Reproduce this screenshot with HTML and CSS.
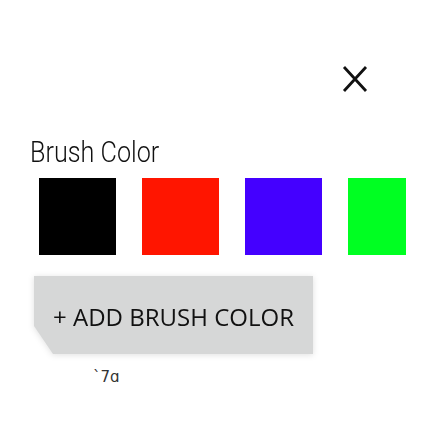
FILE: index.html
```html
<!DOCTYPE html>
<html>
<head>
<meta charset="utf-8">
<link rel="stylesheet" href="styles.css">
</head>
<body>
<div class="page">
  <div class="top">
    <svg class="close" width="26" height="28" viewBox="0 0 26 28">
      <path d="M2 2 L24 26 M24 2 L2 26" stroke="#111" stroke-width="2.8" fill="none"/>
    </svg>
  </div>
  <div class="title"><span>Brush Color</span></div>
  <div class="swatches">
    <div class="sw black"></div>
    <div class="sw red"></div>
    <div class="sw blue"></div>
    <div class="sw green"></div>
  </div>
  <div class="btnwrap"><div class="btn">+ ADD BRUSH COLOR</div></div>
  <div class="note">ˋ7ɑ</div>
</div>
</body>
</html>
```
FILE: styles.css
```css
html, body { margin: 0; padding: 0; background: #fff; }
.page { width: 432px; height: 432px; position: relative; font-family: Roboto, "Noto Sans", sans-serif; }
.top { display: flex; justify-content: flex-end; padding: 65px 64px 0 0; height: 28px; }
.close { display: block; }
.title { margin-top: 41px; padding-left: 30px; font-size: 30px; font-weight: 300; color: #111; line-height: 35px; }
.title span { display: inline-block; transform: scaleX(0.84); transform-origin: left center; }
.swatches { display: flex; gap: 26px; margin-top: 9px; padding-left: 39px; }
.sw { width: 77px; height: 77px; }
.black { background: #000; }
.red { background: #ff1500; }
.blue { background: #4400ff; }
.green { background: #00ff22; width: 58px; }
.btnwrap { margin: 21px 0 0 34px; width: 279px; filter: drop-shadow(0 1px 3px rgba(0,0,0,0.12)); }
.btn {
  height: 78px;
  background: #d6d7d7; color: #111;
  font-family: "Open Sans", sans-serif; font-size: 24px;
  display: flex; align-items: center; justify-content: center;
  clip-path: polygon(0 0, 100% 0, 100% 100%, 19px 100%, 0 50px);
  box-sizing: border-box; padding-top: 2px;
}
.note { margin: 14px 0 0 93px; font-size: 15px; color: #333; font-family: "DejaVu Sans", sans-serif; }
```
